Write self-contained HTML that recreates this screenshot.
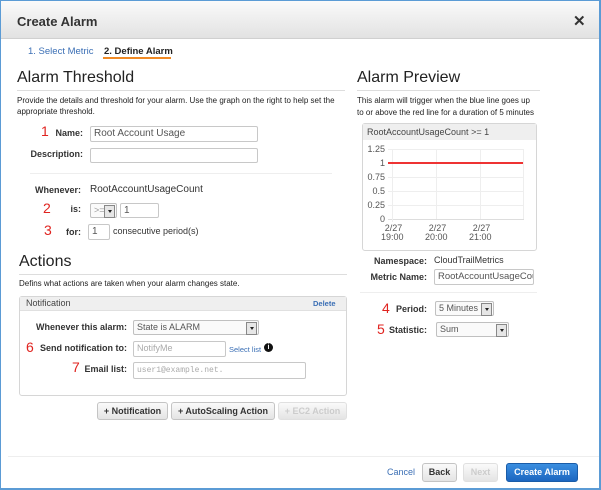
<!DOCTYPE html><html><head><style>
*{box-sizing:border-box;margin:0;padding:0}
body{width:601px;height:490px;position:relative;background:#fff;font-family:"Liberation Sans",Arial,sans-serif;font-size:9px;color:#222;overflow:hidden}
.a{position:absolute;white-space:nowrap}
.frame{position:absolute;left:0;top:0;width:601px;height:490px;border:2px solid #5b9bd5;border-left-width:1px;border-top-width:1px}
.hdr{position:absolute;left:1px;top:1px;width:598px;height:38px;background:linear-gradient(#fafafa,#e2e2e2);border-bottom:1px solid #d0d0d0}
.hr{position:absolute;height:1px;background:#ddd}
.inp{position:absolute;border:1px solid #c8c8c8;border-radius:2px;background:#fff;font-size:10px;color:#555;padding-left:3px;line-height:13px}
.lbl{position:absolute;font-weight:bold;text-align:right;font-size:9px;color:#333}
.red{position:absolute;color:#e0231f;font-size:14px}
.sel{position:absolute;border:1px solid #c0c0c0;border-radius:2px;background:#fafafa;font-size:9px;color:#555;padding-left:3px;line-height:13px}
.sel:after{content:"";position:absolute;right:1px;top:1px;width:9px;height:11px;background:#e6e6e6;border:1px solid #888}
.sel:before{content:"";position:absolute;right:4px;top:6px;border:2px solid transparent;border-top:3px solid #222;z-index:1}
.btn{position:absolute;border:1px solid #c4c4c4;border-radius:3px;background:linear-gradient(#fafafa,#e4e4e4);font-weight:bold;font-size:9px;color:#333;text-align:center;line-height:17px}
.gl{position:absolute;height:1px;background:#eee}
.yl{position:absolute;width:30px;text-align:right;font-size:9px;color:#555}
</style></head><body>
<div class="hdr"></div>
<div class="a" style="left:17px;top:14px;font-size:13px;font-weight:bold;color:#333">Create Alarm</div>
<div class="a" style="left:573px;top:12px;font-size:15px;font-weight:bold;color:#333">✕</div>
<div class="a" style="left:28px;top:46px;color:#3b6fb5;font-size:9.5px">1. Select Metric</div>
<div class="a" style="left:104px;top:46px;font-weight:bold;color:#222;font-size:9.5px">2. Define Alarm</div>
<div class="a" style="left:103px;top:57px;width:68px;height:2px;background:#f08a24"></div>

<div class="a" style="left:17px;top:69px;font-size:16px;color:#222">Alarm Threshold</div>
<div class="hr" style="left:17px;top:90px;width:328px"></div>
<div class="a" style="left:17px;top:95px;line-height:11px;font-size:8px">Provide the details and threshold for your alarm. Use the graph on the right to help set the<br>appropriate threshold.</div>
<div class="red" style="left:41px;top:123px">1</div>
<div class="lbl" style="left:40px;top:128px;width:43px">Name:</div>
<div class="inp" style="left:90px;top:126px;width:168px;height:16px">Root Account Usage</div>
<div class="lbl" style="left:20px;top:149px;width:63px">Description:</div>
<div class="inp" style="left:90px;top:148px;width:168px;height:15px"></div>
<div class="hr" style="left:30px;top:173px;width:302px;background:#eee"></div>
<div class="lbl" style="left:20px;top:185px;width:61px">Whenever:</div>
<div class="a" style="left:90px;top:184px;font-size:10px;color:#333">RootAccountUsageCount</div>
<div class="red" style="left:43px;top:200px">2</div>
<div class="lbl" style="left:40px;top:204px;width:41px">is:</div>
<div class="sel" style="left:90px;top:203px;width:27px;height:15px;color:#999">&gt;=</div>
<div class="inp" style="left:120px;top:203px;width:39px;height:15px">1</div>
<div class="red" style="left:44px;top:222px">3</div>
<div class="lbl" style="left:40px;top:227px;width:41px">for:</div>
<div class="inp" style="left:88px;top:224px;width:22px;height:16px">1</div>
<div class="a" style="left:113px;top:226px;color:#333">consecutive period(s)</div>

<div class="a" style="left:19px;top:253px;font-size:16px;color:#222">Actions</div>
<div class="hr" style="left:19px;top:274px;width:328px"></div>
<div class="a" style="left:19px;top:279px;font-size:8px">Defins what actions are taken when your alarm changes state.</div>
<div class="a" style="left:19px;top:296px;width:328px;height:100px;border:1px solid #d6d6d6;border-radius:3px"></div>
<div class="a" style="left:20px;top:297px;width:326px;height:14px;background:#efefef;border-bottom:1px solid #e0e0e0"></div>
<div class="a" style="left:26px;top:298px;color:#444">Notification</div>
<div class="a" style="left:313px;top:299px;color:#3b6fb5;font-size:7.5px;font-weight:bold">Delete</div>
<div class="lbl" style="left:20px;top:322px;width:107px">Whenever this alarm:</div>
<div class="sel" style="left:133px;top:320px;width:126px;height:15px">State is ALARM</div>
<div class="red" style="left:26px;top:339px">6</div>
<div class="lbl" style="left:30px;top:343px;width:97px">Send notification to:</div>
<div class="inp" style="left:133px;top:341px;width:93px;height:16px;color:#aaa;font-size:9px">NotifyMe</div>
<div class="a" style="left:229px;top:345px;color:#3b6fb5;font-size:7.5px">Select list</div>
<div class="a" style="left:264px;top:343px;width:9px;height:9px;border-radius:50%;background:#111;color:#fff;font-size:7px;font-weight:bold;text-align:center;line-height:9px">i</div>
<div class="red" style="left:72px;top:359px">7</div>
<div class="lbl" style="left:60px;top:364px;width:67px">Email list:</div>
<div class="inp" style="left:133px;top:362px;width:173px;height:17px;font-family:'Liberation Mono',monospace;font-size:8px;color:#aaa;line-height:16px">user1@example.net.</div>

<div class="btn" style="left:97px;top:402px;width:71px;height:18px">+ Notification</div>
<div class="btn" style="left:171px;top:402px;width:104px;height:18px">+ AutoScaling Action</div>
<div class="btn" style="left:278px;top:402px;width:69px;height:18px;color:#ccc;border-color:#e0e0e0">+ EC2 Action</div>

<div class="a" style="left:357px;top:69px;font-size:16px;color:#222">Alarm Preview</div>
<div class="hr" style="left:357px;top:90px;width:183px"></div>
<div class="a" style="left:357px;top:95px;line-height:11.5px;font-size:8px">This alarm will trigger when the blue line goes up<br>to or above the red line for a duration of 5 minutes</div>
<div class="a" style="left:362px;top:123px;width:175px;height:128px;border:1px solid #d6d6d6;border-radius:3px"></div>
<div class="a" style="left:363px;top:124px;width:173px;height:16px;background:#efefef"></div>
<div class="a" style="left:367px;top:127px;color:#444">RootAccountUsageCount &gt;= 1</div>
<div class="gl" style="left:388px;top:149px;width:136px"></div>
<div class="gl" style="left:388px;top:177px;width:136px"></div>
<div class="gl" style="left:388px;top:191px;width:136px"></div>
<div class="gl" style="left:388px;top:205px;width:136px"></div>
<div class="gl" style="left:388px;top:219px;width:136px;background:#ddd"></div>
<div class="a" style="left:392px;top:149px;width:1px;height:73px;background:#eee"></div>
<div class="a" style="left:436px;top:149px;width:1px;height:70px;background:#eee"></div>
<div class="a" style="left:480px;top:149px;width:1px;height:70px;background:#eee"></div>
<div class="a" style="left:523px;top:149px;width:1px;height:70px;background:#eee"></div>
<div class="a" style="left:388px;top:162px;width:135px;height:2px;background:#ee3333"></div>
<div class="yl" style="left:355px;top:144px">1.25</div>
<div class="yl" style="left:355px;top:158px">1</div>
<div class="yl" style="left:355px;top:172px">0.75</div>
<div class="yl" style="left:355px;top:186px">0.5</div>
<div class="yl" style="left:355px;top:200px">0.25</div>
<div class="yl" style="left:355px;top:214px">0</div>
<div class="a" style="left:381px;top:224px;color:#555;text-align:center;line-height:9px">&nbsp;2/27<br>19:00</div>
<div class="a" style="left:425px;top:224px;color:#555;text-align:center;line-height:9px">&nbsp;2/27<br>20:00</div>
<div class="a" style="left:469px;top:224px;color:#555;text-align:center;line-height:9px">&nbsp;2/27<br>21:00</div>
<div class="lbl" style="left:360px;top:256px;width:67px">Namespace:</div>
<div class="a" style="left:434px;top:255px;color:#333">CloudTrailMetrics</div>
<div class="lbl" style="left:360px;top:272px;width:67px">Metric Name:</div>
<div class="inp" style="left:434px;top:269px;width:100px;height:16px;font-size:9.5px;overflow:hidden">RootAccountUsageCou</div>
<div class="hr" style="left:360px;top:292px;width:177px;background:#eee"></div>
<div class="red" style="left:382px;top:300px">4</div>
<div class="lbl" style="left:390px;top:304px;width:37px">Period:</div>
<div class="sel" style="left:435px;top:301px;width:59px;height:15px">5 Minutes</div>
<div class="red" style="left:377px;top:321px">5</div>
<div class="lbl" style="left:385px;top:325px;width:42px">Statistic:</div>
<div class="sel" style="left:436px;top:322px;width:73px;height:15px">Sum</div>

<div class="hr" style="left:8px;top:456px;width:591px;background:#eee"></div>
<div class="a" style="left:387px;top:467px;color:#3b6fb5">Cancel</div>
<div class="btn" style="left:422px;top:463px;width:35px;height:19px">Back</div>
<div class="btn" style="left:463px;top:463px;width:35px;height:19px;color:#ccc;border-color:#e0e0e0">Next</div>
<div class="btn" style="left:506px;top:463px;width:72px;height:19px;background:linear-gradient(#3a8ee0,#1c66c0);border-color:#1a5ca8;color:#fff">Create Alarm</div>
<div class="frame"></div>
</body></html>
